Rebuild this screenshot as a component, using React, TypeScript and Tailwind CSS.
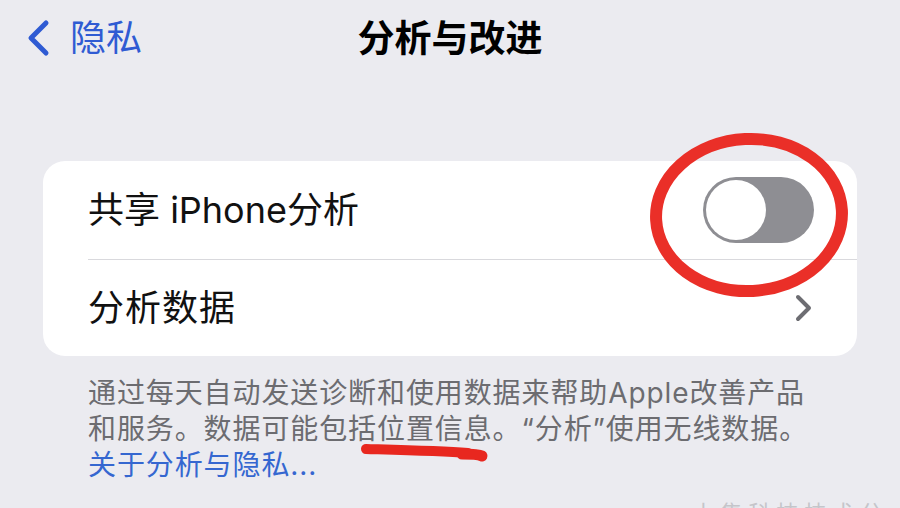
import React from 'react';

// iOS settings page: 隐私 › 分析与改进, with red hand-drawn annotations on top

const Toggle = () => (
  <div className="w-[111px] h-[66px] rounded-full bg-[#8e8e93] p-[3px] flex items-center">
    <div className="w-[60px] h-[60px] rounded-full bg-white" />
  </div>
);

const Chevron = () => (
  <svg width="18" height="28" viewBox="0 0 18 28" fill="none">
    <path d="M3 3 L14 14 L3 25" stroke="#6d6d72" strokeWidth="4" strokeLinecap="round" strokeLinejoin="round" />
  </svg>
);

export default function App() {
  return (
    <div className="relative w-[900px] h-[508px] overflow-hidden bg-[#ebebf0] font-['Inter','Noto_Sans_CJK_SC',sans-serif]">
      {/* Nav bar */}
      <div className="grid grid-cols-3 items-center h-[76px] px-[26px]">
        <div className="flex items-center gap-[18px] text-[#2f5bd3]">
          <svg width="26" height="38" viewBox="0 0 26 38" fill="none">
            <path d="M20 4 L5 19 L20 34" stroke="currentColor" strokeWidth="5" strokeLinecap="round" strokeLinejoin="round" />
          </svg>
          <span className="text-[36px] leading-none">隐私</span>
        </div>
        <div className="text-center text-[37px] font-bold leading-none text-black whitespace-nowrap">分析与改进</div>
        <div />
      </div>

      {/* Settings card */}
      <div className="mt-[85px] mx-[43px] bg-white rounded-[22px] overflow-hidden">
        <div className="h-[98px] flex items-center justify-between pl-[45px] pr-[43px]">
          <span className="text-[36px] text-[#111]">共享 iPhone分析</span>
          <Toggle />
        </div>
        <div className="ml-[45px] h-px bg-[#d9d9dd]" />
        <div className="h-[96px] flex items-center justify-between pl-[45px] pr-[44px]">
          <span className="text-[36px] tracking-[1px] text-[#111]">分析数据</span>
          <Chevron />
        </div>
      </div>

      {/* Footer note */}
      <div className="mt-[19px] pl-[88px] text-[28px] leading-[36px] tracking-[0.9px] text-[#6c6c70] whitespace-nowrap">
        <div>通过每天自动发送诊断和使用数据来帮助Apple改善产品</div>
        <div>和服务。数据可能包括位置信息。“分析”使用无线数据。</div>
        <div className="text-[#3567d0]">关于分析与隐私...</div>
      </div>

      {/* Red annotations */}
      <svg className="absolute inset-0 pointer-events-none" width="900" height="508" viewBox="0 0 900 508" fill="none">
        <ellipse cx="749" cy="215" rx="93" ry="76" stroke="#ea2f28" strokeWidth="12" transform="rotate(-3 749 215)" />
        <path d="M366 449 C 400 450, 440 451, 468 453" stroke="#e8271f" strokeWidth="10" strokeLinecap="round" />
        <path d="M462 454 C 472 454, 480 455, 482 456" stroke="#e8271f" strokeWidth="11" strokeLinecap="round" />
      </svg>

      {/* Cut-off watermark */}
      <div className="absolute left-[654px] top-[497px] flex items-center gap-[14px] opacity-70">
        <div className="w-[26px] h-[26px] rounded-full bg-[#d2d2d6]" />
        <span className="text-[22px] text-[#b5b5ba] tracking-[6px]">小集科技技术分享</span>
      </div>
    </div>
  );
}
